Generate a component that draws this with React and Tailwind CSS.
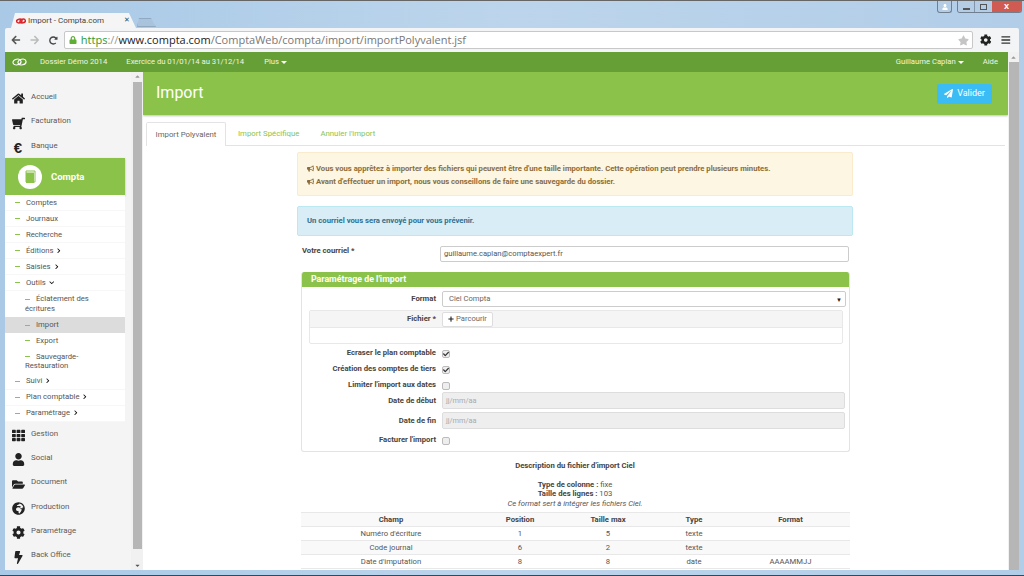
import React from 'react';
import { FaHome, FaShoppingCart, FaTh, FaUser, FaFolderOpen, FaGlobeAfrica, FaCog, FaBolt, FaBullhorn, FaPaperPlane, FaPlus, FaChevronRight, FaChevronDown, FaCheck, FaLock, FaStar, FaArrowLeft, FaArrowRight, FaRedoAlt, FaBars, FaCaretUp, FaCaretDown } from 'react-icons/fa';

const Rings = ({ className, color, width = 2 }) => (
  <svg viewBox="0 0 24 12" className={className} fill="none" stroke={color} strokeWidth={width}>
    <ellipse cx="8" cy="6" rx="6.500" ry="4.500" transform="rotate(-12 8 6)" />
    <ellipse cx="16" cy="6" rx="6.500" ry="4.500" transform="rotate(-12 16 6)" />
  </svg>
);

const Caret = () => <span className="inline-block ml-[2px] align-middle border-x-[3px] border-t-[3px] border-x-transparent border-t-white" />;

const MainLink = ({ icon, label }) => (
  <div className="h-[24.4px] flex items-center pl-[3px] text-[#5a5a5a] text-[7.900px]">
    <span className="w-[20px] flex justify-center text-[#222] text-[13px] mt-[3px]">{icon}</span>
    <span className="ml-[3px] -mt-[1px]">{label}</span>
  </div>
);

const Dash = () => <span className="inline-block w-[5px] h-[1px] bg-[#8bc34a] align-middle mr-[6px]" />;

const SubLink = ({ label, arrow }) => (
  <div className="h-[16px] flex items-center pl-[10px] text-[7.700px] text-[#555] border-b border-[#f7f7f7]">
    <Dash />
    <span>{label}</span>
    {arrow === 'right' && <FaChevronRight className="ml-[3px] text-[5.500px] text-[#111]" />}
    {arrow === 'down' && <FaChevronDown className="ml-[3px] text-[5.500px] text-[#111]" />}
  </div>
);

const SubSubLink = ({ first, second, active, className = '' }) => (
  <div className={`pl-[20px] pt-[3px] pb-[3px] text-[7.700px] leading-[9.600px] text-[#555] ${active ? 'bg-[#dcdcdc]' : ''} ${className}`}>
    <Dash />
    <span>{first}</span>
    {second && <div>{second}</div>}
  </div>
);

const Check = ({ checked }) => (
  <span className="w-[8px] h-[8px] rounded-[2px] border border-[#bbb] bg-[#eee] flex items-center justify-center">
    {checked && <FaCheck className="text-[6px] text-[#333]" />}
  </span>
);

const CheckRow = ({ label, checked, className }) => (
  <div className={`grid grid-cols-[134px_1fr] items-center ${className}`}>
    <span className="text-right font-bold text-[7.700px] text-[#444]">{label}</span>
    <span className="pl-[6px] pt-[1px]"><Check checked={checked} /></span>
  </div>
);

const DateRow = ({ label, className }) => (
  <div className={`grid grid-cols-[134px_1fr] items-center pr-[4px] ${className}`}>
    <span className="text-right font-bold text-[7.700px] text-[#444]">{label}</span>
    <div className="ml-[6px] h-[17px] rounded-[2px] border border-[#ddd] bg-[#eeeeee] flex items-center pl-[3px] text-[7.400px] text-[#aaa]">jj/mm/aa</div>
  </div>
);

const rows = [
  ["Numéro d'écriture", '1', '5', 'texte', ''],
  ['Code journal', '6', '2', 'texte', ''],
  ["Date d'imputation", '8', '8', 'date', 'AAAAMMJJ'],
];

export default function App() {
  return (
    <div className="w-[1024px] h-[576px] overflow-hidden flex flex-col bg-gradient-to-r from-[#a9c9e6] via-[#bcd5ec] to-[#b2cde8] border-t border-[#666] font-['Roboto',sans-serif]">
      {/* title bar */}
      <div className="h-[27px] flex justify-between items-start shrink-0">
        <div className="flex items-end h-full pl-[11px]">
          <div className="w-[125px] h-[15px] bg-[#f5f5f5] [clip-path:polygon(0_100%,4px_0,118px_0,100%_100%)] flex items-center pl-[5px] text-[8px] text-[#444]">
            <Rings className="w-[10px] h-[6px] shrink-0" color="#d8232a" width="3.500" />
            <span className="ml-[2px] whitespace-nowrap">Import - Compta.com</span>
            <span className="ml-[20px] text-[7px] text-[#444]">✕</span>
          </div>
          <div className="w-[19px] h-[9px] mb-[1px] ml-[1px] bg-[#a9c3dc] border border-[#8fa9c2] [clip-path:polygon(0_100%,2px_0,14px_0,100%_100%)]" />
        </div>
        <div className="flex items-start pr-[2px]">
          <div className="w-[15px] h-[12px] mr-[5px] bg-[#b4cde4] border border-[#6f7f8f] border-t-0 rounded-b-[3px] flex items-center justify-center">
            <FaUser className="text-[6px] text-white" />
          </div>
          <div className="flex h-[12px] rounded-b-[3px] overflow-hidden border border-[#6f7f8f] border-t-0">
            <div className="w-[17px] bg-[#b4cde4] border-r border-[#8095aa] flex items-end justify-center pb-[2px]"><span className="w-[7px] h-[2px] bg-white border border-[#555]" /></div>
            <div className="w-[17px] bg-[#b4cde4] flex items-center justify-center"><span className="w-[7px] h-[6px] bg-transparent border border-[#555]" /></div>
            <div className="w-[29px] bg-[#cf5b52] text-white flex items-center justify-center text-[8px] font-bold">X</div>
          </div>
        </div>
      </div>

      {/* toolbar */}
      <div className="h-[24px] mx-[5px] shrink-0 bg-[#f3f4f5] rounded-t-[2px] flex items-center pl-[6px] pr-[8px]">
        <FaArrowLeft className="text-[10px] text-[#555]" />
        <FaArrowRight className="text-[10px] text-[#bbb] ml-[9px]" />
        <FaRedoAlt className="text-[9px] text-[#444] ml-[10px]" />
        <div className="ml-[6px] w-[909px] h-[18px] bg-white border border-[#c8c8c8] rounded-[2px] flex items-center pl-[4px] text-[11px] shrink-0 font-['Open_Sans',sans-serif]">
          <FaLock className="text-[8px] text-[#5fae36]" />
          <span className="ml-[4px] text-[#2d9a2d]">https</span>
          <span className="text-[#999]">://</span>
          <span className="text-[#222]">www.compta.com</span>
          <span className="text-[#777]">/ComptaWeb/compta/import/importPolyvalent.jsf</span>
          <FaStar className="ml-auto mr-[3px] text-[11px] text-[#c5c5c5]" />
        </div>
        <FaCog className="ml-[7px] text-[12px] text-[#222]" />
        <FaBars className="ml-[10px] text-[10px] text-[#333]" />
      </div>

      {/* page */}
      <div className="mx-[5px] h-[518px] shrink-0 bg-white flex overflow-hidden">
        <div className="flex-1 min-w-0 flex flex-col">
          <div className="h-[20px] shrink-0 bg-[#659f36] flex items-center pl-[7px] text-[7.700px] text-[#eef5e6]">
            <Rings className="w-[15px] h-[8px]" color="#ffffff" width="1.800" />
            <span className="ml-[13px]">Dossier Démo 2014</span>
            <span className="ml-[19px]">Exercice du 01/01/14 au 31/12/14</span>
            <span className="ml-[20px]">Plus<Caret /></span>
            <span className="ml-auto">Guillaume Caplan<Caret /></span>
            <span className="ml-[19px] mr-[10px]">Aide</span>
          </div>

          <div className="flex flex-1 min-h-0">
            {/* sidebar */}
            <div className="w-[138px] shrink-0 flex bg-[#f4f4f4]">
              <div className="w-[120px] shrink-0 pt-[13px]">
                <MainLink icon={<FaHome />} label="Accueil" />
                <MainLink icon={<FaShoppingCart className="-scale-x-100" />} label="Facturation" />
                <MainLink icon={<span className="font-['Liberation_Sans',sans-serif] font-bold text-[15px] leading-none">€</span>} label="Banque" />
                <div className="h-[37px] bg-[#8bc34a] shadow-[0_1px_2px_rgba(0,0,0,0.3)] flex items-center pl-[13px]">
                  <span className="w-[24px] h-[24px] rounded-full bg-white flex items-center justify-center">
                    <svg viewBox="0 0 11 13" className="w-[11px] h-[13px]">
                      <path d="M1 1h9v11H1z" fill="#ffffff" stroke="#8bc34a" strokeWidth="1" />
                      <path d="M1 2.500h8V13H1z" fill="#8bc34a" />
                    </svg>
                  </span>
                  <span className="ml-[9px] text-white font-bold text-[9.500px]">Compta</span>
                </div>
                <div className="bg-white">
                  <SubLink label="Comptes" />
                  <SubLink label="Journaux" />
                  <SubLink label="Recherche" />
                  <SubLink label="Éditions" arrow="right" />
                  <SubLink label="Saisies" arrow="right" />
                  <SubLink label="Outils" arrow="down" />
                  <SubSubLink first="Éclatement des" second="écritures" className="pb-[4px]" />
                  <SubSubLink first="Import" active />
                  <SubSubLink first="Export" />
                  <SubSubLink first="Sauvegarde-" second="Restauration" />
                  <SubLink label="Suivi" arrow="right" />
                  <SubLink label="Plan comptable" arrow="right" />
                  <SubLink label="Paramétrage" arrow="right" />
                </div>
                <div>
                  <MainLink icon={<FaTh />} label="Gestion" />
                  <MainLink icon={<FaUser />} label="Social" />
                  <MainLink icon={<FaFolderOpen />} label="Document" />
                  <MainLink icon={<FaGlobeAfrica />} label="Production" />
                  <MainLink icon={<FaCog />} label="Paramétrage" />
                  <MainLink icon={<FaBolt />} label="Back Office" />
                </div>
              </div>
              <div className="w-[12px] ml-[6px] bg-[#f1f1f1] flex flex-col items-center">
                <FaCaretUp className="text-[7px] text-[#999] mt-[1px]" />
                <div className="w-[9px] flex-1 mt-[2px] mb-[13px] bg-[#b6b6b6]" />
                <FaCaretDown className="text-[7px] text-[#555] mb-[1px]" />
              </div>
            </div>

            {/* main */}
            <div className="flex-1 min-w-0 overflow-hidden">
              <div className="h-[43px] bg-[#8bc34a] shadow-[0_1px_2px_rgba(0,0,0,0.25)] flex items-center justify-between pl-[13px] pr-[16px]">
                <h1 className="text-[16px] text-white -mt-[1px]">Import</h1>
                <button className="w-[55px] h-[20px] bg-[#3bbcf5] rounded-[2px] text-white text-[9px] flex items-center justify-center">
                  <FaPaperPlane className="text-[9px] mr-[4px]" />Valider
                </button>
              </div>

              <div className="flex mt-[7px] mx-[3px] h-[24px] border-b border-[#e3e3e3] text-[7.800px]">
                <div className="w-[80px] h-[24px] bg-white border border-b-0 border-[#e3e3e3] rounded-t-[2px] flex items-center justify-center text-[#666]">Import Polyvalent</div>
                <div className="ml-[12px] flex items-center text-[#8bc34a]">Import Spécifique</div>
                <div className="ml-[21px] flex items-center text-[#8bc34a]">Annuler l'import</div>
              </div>

              <div className="w-[556px] ml-[154px] mt-[6px]">
                <div className="h-[44px] bg-[#fcf6e3] border border-[#faebcc] rounded-[2px] pl-[9px] pt-[9px] text-[7.700px] font-bold text-[#8a6d3b] leading-[13px]">
                  <div className="flex items-center"><FaBullhorn className="text-[7px] mr-[2px]" />Vous vous apprêtez à importer des fichiers qui peuvent être d'une taille importante. Cette opération peut prendre plusieurs minutes.</div>
                  <div className="flex items-center"><FaBullhorn className="text-[7px] mr-[2px]" />Avant d'effectuer un import, nous vous conseillons de faire une sauvegarde du dossier.</div>
                </div>
                <div className="h-[30px] mt-[10px] bg-[#d9edf7] border border-[#bce8f1] rounded-[2px] pl-[9px] flex items-center text-[7.700px] font-bold text-[#31708f]">
                  Un courriel vous sera envoyé pour vous prévenir.
                </div>

                <div className="flex mt-[10px] pl-[5px] pr-[4px] items-start">
                  <span className="w-[138px] font-bold text-[7.700px] text-[#444] -mt-[1px]">Votre courriel *</span>
                  <div className="flex-1 h-[16px] bg-white border border-[#ccc] rounded-[2px] flex items-center pl-[3px] text-[7.600px] text-[#555]">guillaume.caplan@comptaexpert.fr</div>
                </div>

                <div className="ml-[4px] mr-[3px] mt-[10px] h-[180px] border border-[#e3e3e3] border-t-0 rounded-[3px] overflow-hidden">
                  <div className="h-[15px] bg-[#8bc34a] pl-[9px] flex items-center text-white font-bold text-[8.800px]">Paramétrage de l'import</div>
                  <div className="grid grid-cols-[134px_1fr] items-center mt-[4px] pr-[3px]">
                    <span className="text-right font-bold text-[7.700px] text-[#444]">Format</span>
                    <div className="ml-[6px] h-[16px] bg-white border border-[#ccc] rounded-[2px] flex items-center justify-between pl-[6px] pr-[3px] text-[7.600px] text-[#666]">
                      Ciel Compta<span className="text-[6px] text-[#222]">▼</span>
                    </div>
                  </div>
                  <div className="ml-[7px] mr-[6px] mt-[3px] h-[34px] border border-[#e8e8e8] rounded-[2px]">
                    <div className="h-[17px] bg-[#f5f5f5] border-b border-[#e8e8e8] grid grid-cols-[126px_1fr] items-center">
                      <span className="text-right font-bold text-[7.700px] text-[#444]">Fichier *</span>
                      <div className="ml-[6px] w-[51px] h-[15px] bg-white border border-[#ddd] rounded-[2px] flex items-center justify-center text-[7.600px] text-[#666]">
                        <FaPlus className="text-[6px] text-[#222] mr-[2px]" />Parcourir
                      </div>
                    </div>
                  </div>
                  <CheckRow label="Ecraser le plan comptable" checked className="h-[16px] mt-[1px]" />
                  <CheckRow label="Création des comptes de tiers" checked className="h-[16px]" />
                  <CheckRow label="Limiter l'import aux dates" className="h-[16px]" />
                  <DateRow label="Date de début" className="-mt-[1px]" />
                  <DateRow label="Date de fin" className="mt-[3px]" />
                  <CheckRow label="Facturer l'import" className="h-[16px] mt-[3px]" />
                </div>

                <div className="text-center text-[7.700px] text-[#555] mt-[9px] leading-[9.600px]">
                  <div className="font-bold text-[#444]">Description du fichier d'import Ciel</div>
                  <div className="mt-[9px]"><b className="text-[#444]">Type de colonne :</b> fixe</div>
                  <div><b className="text-[#444]">Taille des lignes :</b> 103</div>
                  <div className="italic">Ce format sert à intégrer les fichiers Ciel.</div>
                </div>

                <table className="ml-[4px] mt-[4px] w-[549px] table-fixed text-center text-[7.700px] text-[#555] border-t border-[#e8e8e8]">
                  <colgroup>
                    <col className="w-[180px]" /><col className="w-[78px]" /><col className="w-[98px]" /><col className="w-[74px]" /><col className="w-[119px]" />
                  </colgroup>
                  <thead>
                    <tr className="h-[14px] bg-[#f9f9f9] border-b border-[#e8e8e8] font-bold text-[#444]">
                      <th>Champ</th><th>Position</th><th>Taille max</th><th>Type</th><th>Format</th>
                    </tr>
                  </thead>
                  <tbody>
                    {rows.map((r, i) => (
                      <tr key={r[0]} className={`h-[14px] border-b border-[#e8e8e8] ${i === 1 ? 'bg-[#f9f9f9]' : ''}`}>
                        {r.map((c, j) => <td key={j}>{c}</td>)}
                      </tr>
                    ))}
                  </tbody>
                </table>
              </div>
            </div>
          </div>
        </div>

        <div className="w-[11px] shrink-0 bg-[#f1f1f1] flex flex-col items-center">
          <FaCaretUp className="text-[7px] text-[#999] mt-[2px]" />
          <div className="w-[10px] flex-1 mt-[1px] bg-[#b6b6b6]" />
        </div>
      </div>
      <div className="flex-1 border-b border-[#444]" />
    </div>
  );
}
